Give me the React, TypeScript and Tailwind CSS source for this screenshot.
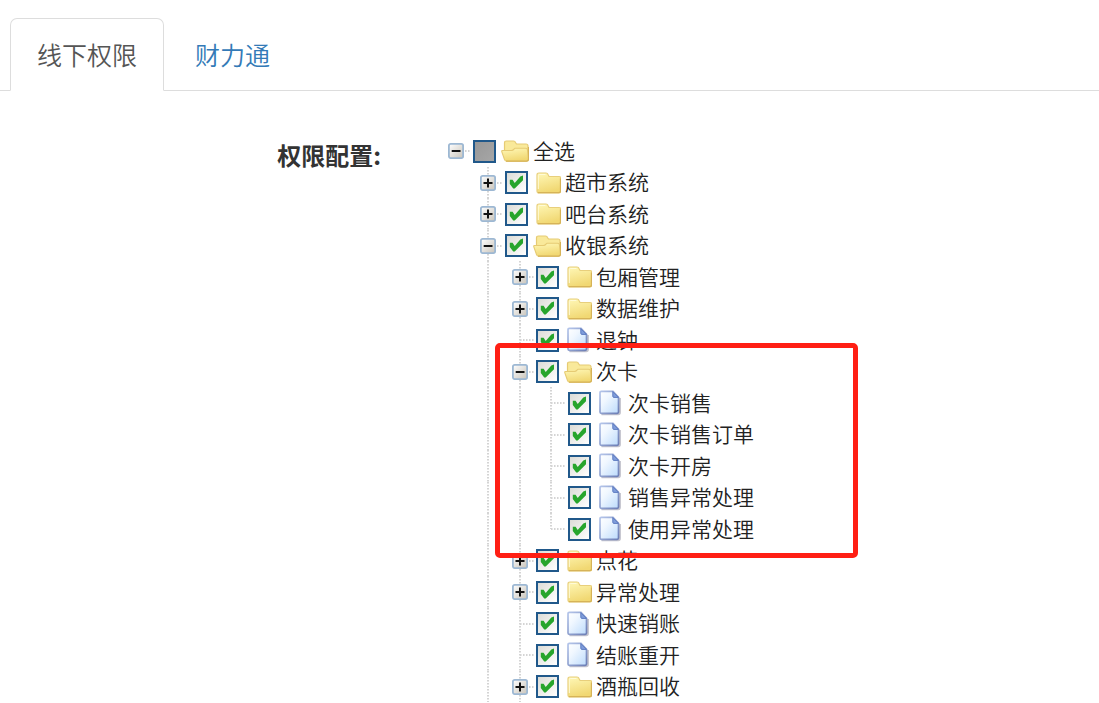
import { useState } from 'react';
import clsx from 'clsx';

type TreeNode = {
  name: string;
  partial?: boolean;
  folder?: boolean;
  open?: boolean;
  children?: TreeNode[];
};

type Row = {
  node: TreeNode;
  level: number;
  last: boolean;
  guides: boolean[];
};

const permissionTree: TreeNode = {
  name: '全选',
  partial: true,
  folder: true,
  open: true,
  children: [
    { name: '超市系统', folder: true },
    { name: '吧台系统', folder: true },
    {
      name: '收银系统',
      folder: true,
      open: true,
      children: [
        { name: '包厢管理', folder: true },
        { name: '数据维护', folder: true },
        { name: '退钟' },
        {
          name: '次卡',
          folder: true,
          open: true,
          children: [
            { name: '次卡销售' },
            { name: '次卡销售订单' },
            { name: '次卡开房' },
            { name: '销售异常处理' },
            { name: '使用异常处理' },
          ],
        },
        { name: '点花', folder: true },
        { name: '异常处理', folder: true },
        { name: '快速销账' },
        { name: '结账重开' },
        { name: '酒瓶回收', folder: true },
      ],
    },
  ],
};

const tabs = ['线下权限', '财力通'];

// the checkbox column of each level starts where the next cell would
const cellWidths = ['w-8', 'w-8', 'w-[31px]', 'w-8'];

function flatten(node: TreeNode, closed: string[], level = 0, guides: boolean[] = [], last = false): Row[] {
  const rows: Row[] = [{ node, level, last, guides }];
  if (!node.children || closed.includes(node.name)) return rows;
  node.children.forEach((child, i) => {
    const isLast = level === 2 && i === node.children!.length - 1;
    rows.push(...flatten(child, closed, level + 1, [...guides, level > 0], isLast));
  });
  return rows;
}

function Gradients() {
  return (
    <svg className="absolute size-0" aria-hidden="true">
      <defs>
        <linearGradient id="folder" x1="0" y1="0" x2="0.3" y2="1">
          <stop offset="0" stopColor="#fff8b8" />
          <stop offset="1" stopColor="#f1d873" />
        </linearGradient>
        <linearGradient id="page" x1="0" y1="0" x2="1" y2="1">
          <stop offset="0" stopColor="#ffffff" />
          <stop offset="0.35" stopColor="#f0f7ff" />
          <stop offset="1" stopColor="#bcdbfc" />
        </linearGradient>
        <linearGradient id="edge" x1="0" y1="0" x2="1" y2="1">
          <stop offset="0" stopColor="#b4c5ea" />
          <stop offset="1" stopColor="#6d7fb6" />
        </linearGradient>
        <linearGradient id="toggle" x1="0" y1="0" x2="1" y2="1">
          <stop offset="0" stopColor="#ffffff" />
          <stop offset="1" stopColor="#c9c4ba" />
        </linearGradient>
      </defs>
    </svg>
  );
}

function ClosedFolder() {
  return (
    <svg className="size-7 shrink-0" viewBox="0 0 28 28" aria-hidden="true">
      <path d="M4 6q0-2 2-2h7q1.500 0 2 1.500l1 2h10q1.700 0 1.700 1.700v12.800q0 2-2 2H6q-2 0-2-2z" fill="url(#folder)" stroke="#e8cf7c" strokeWidth="1.200" />
      <path d="M5 23.700h20.500q2 0 2-2V9.500" fill="none" stroke="#d6b358" strokeWidth="1.300" />
      <path d="M5.300 20V6.500q0-1 1-1h6.200" fill="none" stroke="#fffbd8" strokeWidth="1" />
    </svg>
  );
}

function OpenFolder() {
  return (
    <svg className="size-7 shrink-0" viewBox="0 0 28 28" aria-hidden="true">
      <path d="M3.500 13V6q0-2 2-2h7q1.500 0 2 1.500l1 1.500h9.500q2 0 2 2v14H5z" fill="#f9e99a" stroke="#e6cb74" strokeWidth="1.200" />
      <path d="M1 13.500h9.500q1.500 0 2.500-1.300l1-1h10.500q2 0 2 2l1 9q0 2-2 2H5.500q-1.700 0-2-1.700L.7 14.500z" fill="url(#folder)" stroke="#e6cb74" strokeWidth="1.100" />
      <path d="M5 24.100h20.500q2 0 2-2V10" fill="none" stroke="#d6b358" strokeWidth="1.200" />
    </svg>
  );
}

function Page() {
  return (
    <svg className="size-7 shrink-0" viewBox="0 0 28 28" aria-hidden="true">
      <path d="M5.500 25.200h16.700q1.700 0 1.700-1.700V9" fill="none" stroke="#c3c3cd" strokeWidth="2" />
      <path d="M5.300 2.400h11.700l5.500 5.900v14.700q0 1.300-1.300 1.300H5.300q-1.300 0-1.300-1.300V3.700q0-1.300 1.300-1.300z" fill="url(#page)" stroke="url(#edge)" strokeWidth="1.700" />
      <path d="M16.800 2.600v4.600q0 1.200 1.200 1.200h4.500z" fill="#7f9ddb" stroke="#5f7dc2" strokeWidth="1" />
    </svg>
  );
}

function Toggle({ open, name, onClick }: { open: boolean; name: string; onClick: () => void }) {
  return (
    <button
      type="button"
      onClick={onClick}
      aria-expanded={open}
      aria-label={name}
      className="absolute left-[7px] top-1/2 size-4 -translate-y-1/2 cursor-pointer"
    >
      <svg className="size-4" viewBox="0 0 16 16" aria-hidden="true">
        <rect x="0.900" y="0.900" width="14.200" height="14.200" rx="1.800" fill="url(#toggle)" stroke="#9db8d3" strokeWidth="1.800" />
        <path d={open ? 'M3.700 8h8.800' : 'M3.500 8h9M8 3.500v9'} stroke="#111" strokeWidth="2" />
      </svg>
    </button>
  );
}

function Guide({ half }: { half?: boolean }) {
  return (
    <span
      className={clsx(
        'absolute left-[14px] top-0 w-0.5 bg-[repeating-linear-gradient(to_bottom,#d4d4d4_0_1px,#e8e8e8_1px_2px,transparent_2px_3px)]',
        half ? 'h-1/2' : 'h-full'
      )}
    />
  );
}

function TreeRow({ row, isClosed, onToggle }: { row: Row; isClosed: boolean; onToggle: () => void }) {
  const { node, level, guides, last } = row;
  const open = !!node.open && !isClosed;
  const [checked, setChecked] = useState(!node.partial);

  return (
    <li className="flex odd:h-8 even:h-[31px]">
      {guides.map((line, i) => (
        <span key={i} className={clsx('relative shrink-0', cellWidths[i])}>
          {line && <Guide />}
        </span>
      ))}
      <span className={clsx('relative shrink-0', cellWidths[level])}>
        {level > 0 && <Guide half={last} />}
        <span className="absolute left-[15px] right-0.5 top-1/2 h-0.5 -translate-y-1/2 bg-[repeating-linear-gradient(to_right,#d4d4d4_0_1px,#e8e8e8_1px_2px,transparent_2px_3px)]" />
        {node.folder && <Toggle open={open} name={node.name} onClick={onToggle} />}
      </span>
      <label className="flex items-center whitespace-nowrap">
        <span className="relative size-[23px] shrink-0">
          <input
            type="checkbox"
            checked={checked}
            onChange={(e) => setChecked(e.target.checked)}
            className={clsx(
              'block size-[23px] appearance-none border-2 border-[#20588a]',
              node.partial && !checked
                ? 'bg-linear-to-br from-[#989898] to-[#a6a6a6]'
                : 'bg-linear-to-br from-[#dcdcd7] to-white'
            )}
          />
          {checked && (
            <svg className="pointer-events-none absolute inset-0 size-[23px]" viewBox="0 0 23 23" aria-hidden="true">
              <path d="M4.800 8.800h2.800l2.100 3.200L15.300 5.600l2.700-1.100v4.700l-8.300 8.300H8.200L4.800 13z" fill="#27a52c" />
            </svg>
          )}
        </span>
        <span className="ml-[5px] mr-1">
          {!node.folder ? <Page /> : open ? <OpenFolder /> : <ClosedFolder />}
        </span>
        <span className="pb-0.5 text-[21px] leading-none font-[350]">{node.name}</span>
      </label>
    </li>
  );
}

export default function App() {
  const [activeTab, setActiveTab] = useState(0);
  const [closed, setClosed] = useState<string[]>([]);

  const toggleNode = (name: string) => {
    setClosed(closed.includes(name) ? closed.filter((n) => n !== name) : [...closed, name]);
  };

  return (
    <div className="bg-white pt-[18px] font-['Noto_Sans_CJK_SC',sans-serif] text-[#222]">
      <Gradients />
      <nav className="flex gap-1 border-b border-[#ddd] pl-[10px]">
        {tabs.map((tab, i) => (
          <button
            key={tab}
            type="button"
            onClick={() => setActiveTab(i)}
            className={clsx(
              '-mb-px h-[73px] cursor-pointer rounded-t-[7px] border px-[26px] text-[25px] font-[350]',
              i === activeTab
                ? 'border-[#ddd] border-b-white bg-white text-[#555]'
                : 'border-transparent text-[#337ab7]'
            )}
          >
            {tab}
          </button>
        ))}
      </nav>

      <main className="flex gap-[60px] pt-11">
        <h2 className="w-[381px] shrink-0 pt-0.5 text-right text-2xl leading-9 font-bold text-[#333]">权限配置:</h2>
        <div className="relative flex-1">
          <ul>
            {flatten(permissionTree, closed).map((row) => (
              <TreeRow
                key={row.node.name}
                row={row}
                isClosed={closed.includes(row.node.name)}
                onToggle={() => toggleNode(row.node.name)}
              />
            ))}
          </ul>
          <div className="pointer-events-none absolute left-[54px] top-[208px] h-[215px] w-[363px] rounded-[5px] border-5 border-[#ff1f14]" />
        </div>
      </main>
    </div>
  );
}
